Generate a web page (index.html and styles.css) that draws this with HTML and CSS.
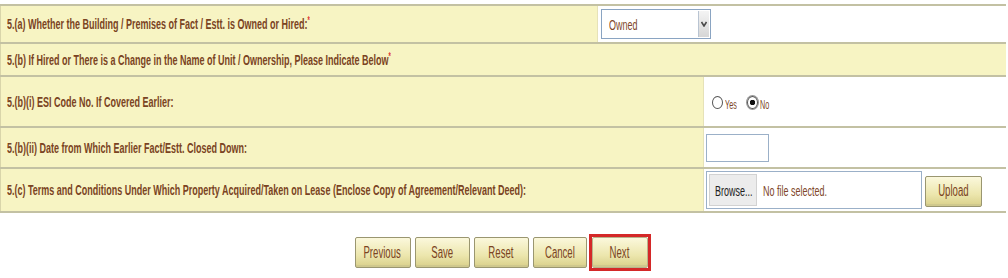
FILE: index.html
```html
<!DOCTYPE html>
<html lang="en">
<head>
    <meta charset="UTF-8">
    <title>Premises Details</title>
    <link rel="stylesheet" href="styles.css">
</head>
<body>
<form class="wrap">
    <table class="form-table">
        <colgroup>
            <col class="c1">
            <col class="c2">
            <col class="c3">
        </colgroup>
        <!-- 5(a) owned or hired -->
        <tr class="r1">
            <td class="lbl-cell"><span class="txt">5.(a) Whether the Building / Premises of Fact / Estt. is Owned or Hired:<b class="req">*</b></span></td>
            <td class="val-cell" colspan="2">
                <div class="select-box">
                    <span class="txt sel-text">Owned</span>
                    <span class="sel-arrow">
                        <svg width="6" height="6" viewBox="0 0 6 6"><path d="M0.5 1 L3 5 L5.5 1" fill="none" stroke="#4a4a4a" stroke-width="1.6"/></svg>
                    </span>
                </div>
            </td>
        </tr>
        <tr class="r2">
            <td class="lbl-cell" colspan="3"><span class="txt">5.(b) If Hired or There is a Change in the Name of Unit / Ownership, Please Indicate Below<b class="req">*</b></span></td>
        </tr>
        <tr class="r3">
            <td class="lbl-cell" colspan="2"><span class="txt">5.(b)(i) ESI Code No. If Covered Earlier:</span></td>
            <td class="val-cell">
                <div class="radios">
                    <span class="radio"></span><span class="txt small">Yes</span>
                    <span class="radio checked"></span><span class="txt small">No</span>
                </div>
            </td>
        </tr>
        <tr class="r4">
            <td class="lbl-cell" colspan="2"><span class="txt">5.(b)(ii) Date from Which Earlier Fact/Estt. Closed Down:</span></td>
            <td class="val-cell"><div class="text-box"></div></td>
        </tr>
        <tr class="r5">
            <td class="lbl-cell" colspan="2"><span class="txt">5.(c) Terms and Conditions Under Which Property Acquired/Taken on Lease (Enclose Copy of Agreement/Relevant Deed):</span></td>
            <td class="val-cell">
                <div class="upload-row">
                    <div class="file-box">
                        <span class="browse"><span class="txt plain">Browse...</span></span>
                        <span class="txt file-name">No file selected.</span>
                    </div>
                    <div class="btn small-btn"><span class="txt">Upload</span></div>
                </div>
            </td>
        </tr>
    </table>

    <div class="actions">
        <div class="btn w-prev"><span class="txt">Previous</span></div>
        <div class="btn w-save"><span class="txt">Save</span></div>
        <div class="btn w-reset"><span class="txt">Reset</span></div>
        <div class="btn w-cancel"><span class="txt">Cancel</span></div>
        <div class="next-mark"><div class="btn w-next"><span class="txt">Next</span></div></div>
    </div>
</form>
</body>
</html>
```

FILE: styles.css
```css
body {
    margin: 0;
    padding: 4px 0 0;
    background: #fff;
    font-family: 'Liberation Sans', Arial, sans-serif;
}
.wrap {
    width: 1005px;
}
.form-table {
    width: 1005px;
    border-collapse: collapse;
    table-layout: fixed;
}
.c1 { width: 597px; }
.c2 { width: 106px; }
.c3 { width: 302px; }
.form-table td {
    border-top: 2px solid #c3c1a3;
    border-bottom: 2px solid #c3c1a3;
    padding: 0;
    vertical-align: middle;
    overflow: hidden;
    white-space: nowrap;
}
.lbl-cell {
    background: #f7f4c3;
    border-left: 1px solid #d9d5aa;
    padding-left: 6px !important;
}
.val-cell {
    background: #fff;
    border-left: 1px solid #e6e2b8;
}
.r1 td { height: 36px; }
.r2 td { height: 31px; }
.r3 td { height: 49px; }
.r4 td { height: 39px; }
.r5 td { height: 42px; }

/* squeezed text, like the screenshot */
.txt {
    display: inline-block;
    font-size: 15px;
    font-weight: bold;
    color: #7a4322;
    transform: scaleX(.6);
    transform-origin: 0 50%;
    white-space: nowrap;
}
.req {
    color: #e03030;
    font-size: 10px;
    vertical-align: top;
}
.select-box {
    display: flex;
    align-items: center;
    justify-content: space-between;
    width: 110px;
    height: 30px;
    margin-left: 3px;
    border: 1px solid #8aa4c2;
    box-sizing: border-box;
    background: #fff;
}
.sel-text {
    font-weight: normal;
    margin-left: 7px;
    color: #80472a;
}
.sel-arrow {
    display: flex;
    align-items: center;
    justify-content: center;
    width: 10px;
    height: 26px;
    margin-right: 1px;
    background: linear-gradient(#f4f4f4, #d6d6d6);
    border-left: 1px solid #b9c4d2;
}
.radios {
    display: flex;
    align-items: center;
    padding: 2px 0 0 8px;
}
.radio {
    width: 11px;
    height: 13px;
    border: 1px solid #555;
    border-radius: 50%;
    box-sizing: border-box;
    background: #fff;
}
.radio.checked {
    margin-left: 10px;
    background: radial-gradient(circle, #111 0 2.5px, #fff 3px);
    box-shadow: 0 0 0 1px #999;
}
.small {
    font-size: 12px;
    font-weight: normal;
    margin: 4px 0 0 2px;
    width: 12px;
}
.text-box {
    width: 63px;
    height: 28px;
    margin: 0 0 0 2px;
    border: 1px solid #9bb0c8;
    box-sizing: border-box;
}
.upload-row {
    display: flex;
    align-items: center;
    gap: 3px;
    padding-left: 2px;
}
.file-box {
    display: flex;
    align-items: center;
    width: 216px;
    height: 38px;
    border: 1px solid #9bb0c8;
    box-sizing: border-box;
    padding: 2px;
}
.browse {
    display: flex;
    align-items: center;
    width: 48px;
    height: 100%;
    padding-left: 5px;
    box-sizing: border-box;
    background: #ececec;
    border: 1px solid #d2d2d2;
}
.plain {
    font-weight: normal;
    color: #222;
}
.file-name {
    font-weight: normal;
    margin-left: 6px;
    color: #80472a;
}
.btn {
    display: flex;
    align-items: center;
    justify-content: center;
    height: 31px;
    box-sizing: border-box;
    border: 1px solid #9a9670;
    border-radius: 2px;
    background: linear-gradient(#fbf8dc, #ece6ad 60%, #d9d08a);
    box-shadow: inset 0 -2px 0 #cfc88d;
}
.btn .txt {
    font-weight: normal;
    font-size: 16px;
    transform-origin: 50% 50%;
}
.small-btn {
    width: 57px;
    height: 31px;
    margin-top: 2px;
}
.actions {
    display: flex;
    justify-content: center;
    align-items: center;
    gap: 4px;
    margin-top: 21px;
}
.w-prev { width: 56px; }
.w-save { width: 55px; }
.w-reset { width: 55px; }
.w-cancel { width: 54px; }
.w-next { width: 56px; border-color: #b8b48c; }
.next-mark {
    border: 3px solid #d42828;
    margin-left: -2px;
}
```
